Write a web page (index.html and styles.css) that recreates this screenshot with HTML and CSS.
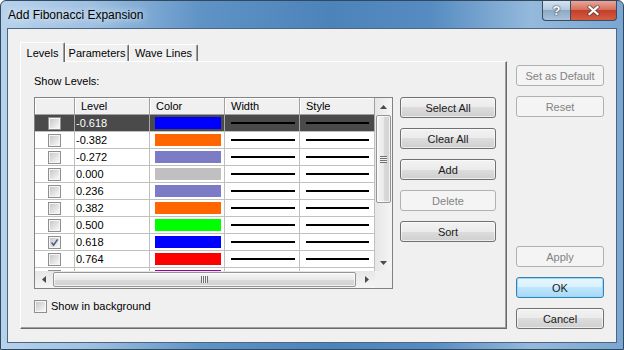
FILE: index.html
```html
<!DOCTYPE html>
<html lang="en">
  <head>
    <meta charset="UTF-8" />
    <meta name="viewport" content="width=device-width, initial-scale=1.0" />
    <title>Add Fibonacci Expansion</title>

    <link rel="stylesheet" href="styles.css">
  </head>

  <body>
    <div class="window">
      <div class="titlebar">
        <span class="title">Add Fibonacci Expansion</span>
        <div class="caps">
          <div class="cap help">?</div>
          <div class="cap close">
            <svg width="13" height="11" viewBox="0 0 13 11">
              <path d="M2.5 2 L10.5 9 M10.5 2 L2.5 9" stroke="#3b3b3b" stroke-width="4" stroke-linecap="square" fill="none" opacity="0.55" />
              <path d="M2.5 2 L10.5 9 M10.5 2 L2.5 9" stroke="#fff" stroke-width="2.2" stroke-linecap="square" fill="none" />
            </svg>
          </div>
        </div>
      </div>

      <div class="client">
        <div class="tabs">
          <div class="tabstrip">
            <div class="tab active t-levels">Levels</div>
            <div class="tab t-params">Parameters</div>
            <div class="tab t-wave">Wave Lines</div>
          </div>

          <div class="panel">
            <div class="label">Show Levels:</div>
            <div class="panel-body">
              <div class="grid">
                <div class="grid-top">
                  <div class="rows">
                    <div class="row head">
                      <div class="cell w-check"></div>
                      <div class="cell w-col">Level</div>
                      <div class="cell w-col">Color</div>
                      <div class="cell w-col">Width</div>
                      <div class="cell w-col">Style</div>
                    </div>

                    <div class="row sel">
                      <div class="cell w-check"><span class="check"></span></div>
                      <div class="cell w-col lvl">-0.618</div>
                      <div class="cell w-col"><span class="swatch c-blue"></span></div>
                      <div class="cell w-col"><span class="line"></span></div>
                      <div class="cell w-col"><span class="line short"></span></div>
                    </div>
                    <div class="row">
                      <div class="cell w-check"><span class="check"></span></div>
                      <div class="cell w-col lvl">-0.382</div>
                      <div class="cell w-col"><span class="swatch c-orange"></span></div>
                      <div class="cell w-col"><span class="line"></span></div>
                      <div class="cell w-col"><span class="line short"></span></div>
                    </div>
                    <div class="row">
                      <div class="cell w-check"><span class="check"></span></div>
                      <div class="cell w-col lvl">-0.272</div>
                      <div class="cell w-col"><span class="swatch c-slate"></span></div>
                      <div class="cell w-col"><span class="line"></span></div>
                      <div class="cell w-col"><span class="line short"></span></div>
                    </div>
                    <div class="row">
                      <div class="cell w-check"><span class="check"></span></div>
                      <div class="cell w-col lvl">0.000</div>
                      <div class="cell w-col"><span class="swatch c-silver"></span></div>
                      <div class="cell w-col"><span class="line"></span></div>
                      <div class="cell w-col"><span class="line short"></span></div>
                    </div>
                    <div class="row">
                      <div class="cell w-check"><span class="check"></span></div>
                      <div class="cell w-col lvl">0.236</div>
                      <div class="cell w-col"><span class="swatch c-slate"></span></div>
                      <div class="cell w-col"><span class="line"></span></div>
                      <div class="cell w-col"><span class="line short"></span></div>
                    </div>
                    <div class="row">
                      <div class="cell w-check"><span class="check"></span></div>
                      <div class="cell w-col lvl">0.382</div>
                      <div class="cell w-col"><span class="swatch c-orange"></span></div>
                      <div class="cell w-col"><span class="line"></span></div>
                      <div class="cell w-col"><span class="line short"></span></div>
                    </div>
                    <div class="row">
                      <div class="cell w-check"><span class="check"></span></div>
                      <div class="cell w-col lvl">0.500</div>
                      <div class="cell w-col"><span class="swatch c-lime"></span></div>
                      <div class="cell w-col"><span class="line"></span></div>
                      <div class="cell w-col"><span class="line short"></span></div>
                    </div>
                    <div class="row">
                      <div class="cell w-check">
                        <span class="check">
                          <svg width="9" height="9" viewBox="0 0 9 9"><path d="M1.6 4.6 L3.6 7.2 L7.6 1.4" stroke="#4b5b8e" stroke-width="1.6" fill="none" /></svg>
                        </span>
                      </div>
                      <div class="cell w-col lvl">0.618</div>
                      <div class="cell w-col"><span class="swatch c-blue"></span></div>
                      <div class="cell w-col"><span class="line"></span></div>
                      <div class="cell w-col"><span class="line short"></span></div>
                    </div>
                    <div class="row">
                      <div class="cell w-check"><span class="check"></span></div>
                      <div class="cell w-col lvl">0.764</div>
                      <div class="cell w-col"><span class="swatch c-red"></span></div>
                      <div class="cell w-col"><span class="line"></span></div>
                      <div class="cell w-col"><span class="line short"></span></div>
                    </div>
                    <div class="row">
                      <div class="cell w-check"><span class="check"></span></div>
                      <div class="cell w-col lvl">1.000</div>
                      <div class="cell w-col"><span class="swatch c-purple"></span></div>
                      <div class="cell w-col"><span class="line"></span></div>
                      <div class="cell w-col"><span class="line short"></span></div>
                    </div>
                  </div>

                  <div class="vscroll">
                    <div class="arrow">
                      <svg width="7" height="4" viewBox="0 0 7 4"><path d="M0 4 L3.5 0 L7 4 Z" fill="#4a4a4a" /></svg>
                    </div>
                    <div class="vthumb"><span class="vgrip"></span></div>
                    <div class="track"></div>
                    <div class="arrow">
                      <svg width="7" height="4" viewBox="0 0 7 4"><path d="M0 0 L3.5 4 L7 0 Z" fill="#4a4a4a" /></svg>
                    </div>
                  </div>
                </div>

                <div class="grid-bottom">
                  <div class="hscroll">
                    <div class="arrow harrow">
                      <svg width="4" height="7" viewBox="0 0 4 7"><path d="M4 0 L0 3.5 L4 7 Z" fill="#4a4a4a" /></svg>
                    </div>
                    <div class="hthumb"><span class="hgrip"></span></div>
                    <div class="arrow harrow right">
                      <svg width="4" height="7" viewBox="0 0 4 7"><path d="M0 0 L4 3.5 L0 7 Z" fill="#4a4a4a" /></svg>
                    </div>
                  </div>
                  <div class="corner"></div>
                </div>
              </div>

              <div class="btn-col">
                <div class="btn">Select All</div>
                <div class="btn">Clear All</div>
                <div class="btn">Add</div>
                <div class="btn off">Delete</div>
                <div class="btn">Sort</div>
              </div>
            </div>

            <div class="bg-check">
              <span class="check"></span>
              <span>Show in background</span>
            </div>
          </div>
        </div>

        <div class="side">
          <div class="btn off">Set as Default</div>
          <div class="btn off">Reset</div>
          <div class="btn off apply">Apply</div>
          <div class="btn ok">OK</div>
          <div class="btn">Cancel</div>
        </div>
      </div>
    </div>
  </body>
</html>
```

FILE: styles.css
```css
body {
  margin: 0;
  background: #fff;
  font-family: "Liberation Sans", Arial, sans-serif;
  font-size: 11px;
  color: #000;
}

.window {
  width: 624px;
  height: 350px;
  box-sizing: border-box;
  border: 1px solid #34485d;
  border-radius: 6px 6px 0 0;
  padding: 0 6px 6px 6px;
  display: flex;
  flex-direction: column;
  background: linear-gradient(
    to right,
    #b7d2ec 0,
    #9dc0e2 90px,
    #5f93c6 200px,
    #4c83b9 330px,
    #568cc1 430px,
    #94b9dc 530px,
    #7aa6d2 100%
  );
}

/* title bar */
.titlebar {
  height: 27px;
  flex-shrink: 0;
  display: flex;
  align-items: flex-start;
}
.title {
  margin: 7px 0 0 1px;
  font-size: 12px;
  line-height: 15px;
  color: #000;
  text-shadow: 0 0 7px rgba(255, 255, 255, 0.9), 0 0 14px rgba(255, 255, 255, 0.7);
}
.caps {
  margin-left: auto;
  display: flex;
}
.cap {
  height: 20px;
  box-sizing: border-box;
  border: 1px solid #3a4c60;
  border-top: none;
  display: flex;
  align-items: center;
  justify-content: center;
}
.help {
  width: 28px;
  border-right: none;
  border-radius: 0 0 0 4px;
  background: linear-gradient(#d5e2ef 0%, #b5cadf 45%, #8ea9c5 50%, #a9c2da 100%);
  color: #fff;
  font-weight: bold;
  font-size: 13px;
  text-shadow: 0 0 2px #2d3f52, 0 0 1px #2d3f52;
}
.close {
  width: 47px;
  border-radius: 0 0 4px 0;
  background: linear-gradient(#eaa598 0%, #d7715f 45%, #c2402b 50%, #d65c41 100%);
}
.close svg {
  display: block;
}

/* client area */
.client {
  flex: 1;
  display: flex;
  align-items: flex-start;
  gap: 9px;
  padding: 13px 0 0 12px;
  background: #f0f0f0;
  border: 1px solid #4d6580;
}

.tabs {
  width: 487px;
  height: 287px;
  display: flex;
  flex-direction: column;
}
.tabstrip {
  height: 19px;
  display: flex;
  align-items: flex-end;
  flex-shrink: 0;
}
.tab {
  box-sizing: border-box;
  height: 17px;
  padding-top: 1px;
  line-height: 14px;
  text-align: center;
  background: #f0f0f0;
  border-left: 1px solid #fff;
  border-top: 1px solid #fff;
  border-right: 1px solid #696969;
  border-radius: 2px 2px 0 0;
  box-shadow: inset -1px 0 0 #a0a0a0;
}
.tab.active {
  height: 20px;
  padding-top: 3px;
  margin-bottom: -1px;
  position: relative;
  z-index: 1;
}
.t-levels {
  width: 45px;
}
.t-params {
  width: 64px;
}
.t-wave {
  width: 69px;
}

.panel {
  flex: 1;
  background: #f0f0f0;
  border-top: 1px solid #fff;
  border-left: 1px solid #fff;
  border-right: 1px solid #696969;
  border-bottom: 1px solid #696969;
  box-shadow: inset -1px -1px 0 #a0a0a0;
  padding-left: 13px;
}
.label {
  margin-top: 13px;
  line-height: 13px;
  margin-bottom: 9px;
}
.panel-body {
  display: flex;
  gap: 7px;
}

/* levels grid */
.grid {
  width: 359px;
  height: 192px;
  box-sizing: border-box;
  border: 1px solid #828282;
  background: #fff;
  display: flex;
  flex-direction: column;
}
.grid-top {
  height: 173px;
  display: flex;
}
.rows {
  width: 340px;
  height: 173px;
  overflow: hidden;
}
.row {
  display: flex;
  height: 17px;
}
.cell {
  flex: none;
  box-sizing: border-box;
  height: 17px;
  border-right: 1px solid #c0c0c0;
  border-bottom: 1px solid #c0c0c0;
  display: flex;
  align-items: center;
}
.w-check {
  width: 40px;
  justify-content: center;
}
.w-col {
  width: 75px;
}
.head .cell {
  background: #f0f0f0;
  border-right-color: #a0a0a0;
  border-bottom-color: #a0a0a0;
  box-shadow: inset 1px 1px 0 #fff;
  padding-left: 6px;
}
.lvl {
  padding-left: 1px;
}
.row.sel {
  background: #4a4a4a;
  color: #fff;
}
.row.sel .cell {
  border-right-color: #a8a8a8;
}

.swatch {
  width: 66px;
  height: 12px;
  margin-left: 5px;
}
.c-blue {
  background: #0000ff;
}
.c-orange {
  background: #ff6600;
}
.c-slate {
  background: #7b7bc6;
}
.c-silver {
  background: #c0c0c0;
}
.c-lime {
  background: #00ff00;
}
.c-red {
  background: #ff0000;
}
.c-purple {
  background: #a000a0;
}

.line {
  width: 64px;
  height: 2px;
  margin-left: 6px;
  background: #000;
}
.line.short {
  width: 63px;
}

.check {
  width: 13px;
  height: 13px;
  box-sizing: border-box;
  flex: none;
  padding: 1px;
  border: 1px solid #8e8f8f;
  background: linear-gradient(135deg, #c8c8c8, #f8f8f8) content-box, #f5f5f5;
}
.check svg {
  display: block;
}

/* scrollbars */
.vscroll {
  width: 17px;
  display: flex;
  flex-direction: column;
  background: linear-gradient(to right, #e6e6e6, #f5f5f5);
}
.arrow {
  height: 17px;
  flex: none;
  display: flex;
  align-items: center;
  justify-content: center;
}
.vthumb {
  height: 88px;
  margin: 0 1px;
  box-sizing: border-box;
  border: 1px solid #959595;
  border-radius: 2px;
  background: linear-gradient(to right, #f6f6f6, #e9e9e9 50%, #dadada 50%, #d2d2d2);
  box-shadow: inset 0 0 0 1px rgba(255, 255, 255, 0.7);
  display: flex;
  align-items: center;
  justify-content: center;
}
.vgrip {
  width: 7px;
  height: 7px;
  background: repeating-linear-gradient(#707070 0 1px, #f2f2f2 1px 2px);
}
.track {
  flex: 1;
}

.grid-bottom {
  height: 17px;
  display: flex;
}
.hscroll {
  width: 340px;
  display: flex;
  background: linear-gradient(#e6e6e6, #f5f5f5);
}
.harrow {
  width: 17px;
}
.harrow.right {
  margin-left: auto;
}
.hthumb {
  width: 303px;
  margin: 1px 0 1px 1px;
  box-sizing: border-box;
  border: 1px solid #959595;
  border-radius: 2px;
  background: linear-gradient(#f6f6f6, #e9e9e9 50%, #dadada 50%, #d2d2d2);
  box-shadow: inset 0 0 0 1px rgba(255, 255, 255, 0.7);
  display: flex;
  align-items: center;
  justify-content: center;
}
.hgrip {
  width: 7px;
  height: 7px;
  background: repeating-linear-gradient(to right, #707070 0 1px, #f2f2f2 1px 2px);
}
.corner {
  width: 17px;
  background: #f0f0f0;
}

/* buttons */
.btn-col {
  width: 96px;
  display: flex;
  flex-direction: column;
  gap: 10px;
}
.btn {
  height: 21px;
  box-sizing: border-box;
  font-weight: normal;
  color: #1a1a1a;
  border: 1px solid #707070;
  border-radius: 3px;
  background: linear-gradient(#f2f2f2, #ebebeb 50%, #dddddd 50%, #cfcfcf);
  box-shadow: inset 0 0 0 1px rgba(255, 255, 255, 0.6);
  display: flex;
  align-items: center;
  justify-content: center;
}
.btn.off {
  color: #838383;
  border-color: #adb2b5;
  background: #f4f4f4;
  box-shadow: none;
}
.btn.ok {
  border-color: #3c7fb1;
  background: linear-gradient(#eaf6fd, #d9f0fc 50%, #bee6fd 50%, #a7d9f5);
  box-shadow: inset 0 0 0 1px #8fdcfb;
}

.bg-check {
  margin-top: 11px;
  display: flex;
  align-items: center;
  gap: 4px;
  line-height: 13px;
}

.side {
  width: 88px;
  height: 287px;
  display: flex;
  flex-direction: column;
  gap: 10px;
  padding-top: 23px;
  box-sizing: border-box;
}
.side .apply {
  margin-top: auto;
}
```
